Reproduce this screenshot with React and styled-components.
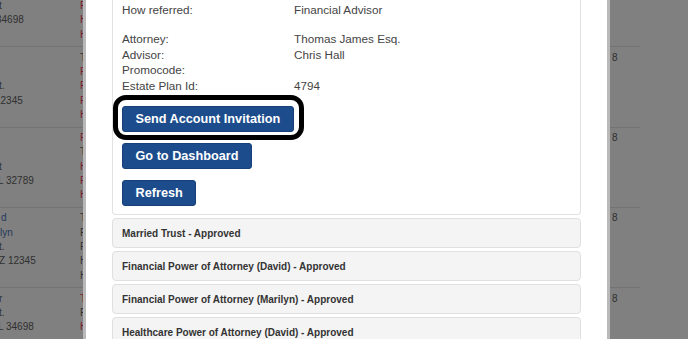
import React from 'react';
import styled, { createGlobalStyle } from 'styled-components';

const GlobalStyle = createGlobalStyle`
    html, body {
        margin: 0;
        padding: 0;
        overflow: hidden;
        background: #808080;
    }
    body {
        font-family: 'Liberation Sans', Arial, sans-serif;
    }
`;

const Screen = styled.div`
    display: flex;
    width: 688px;
    height: 339px;
    overflow: hidden;
    background: #808080;
`;

const Backdrop = styled.div`
    flex: ${props => props.$grow ? '1' : 'none'};
    width: ${props => props.$width ? `${props.$width}px` : 'auto'};
    align-self: flex-start;
    margin-top: -33px;
    overflow: hidden;
`;

const BackTable = styled.div`
    width: ${props => props.$width}px;
`;

const BackRow = styled.div`
    display: flex;
    box-sizing: border-box;
    height: 80.3px;
    padding-top: 3.5px;
    border-bottom: 1px solid #737373;
`;

const AddressCell = styled.div`
    width: 80px;
    flex: none;
    overflow: hidden;
    white-space: nowrap;
`;

const FlagCell = styled.div`
    flex: none;
    padding-left: ${props => props.$pad || 0}px;
`;

const tones = {
    dark: '#2f2f2f',
    red: '#7a1a2c',
    blue: '#26385a',
};

const BackLine = styled.div`
    height: 14.3px;
    line-height: 14.3px;
    font-size: 10px;
    color: ${props => tones[props.$tone || 'dark']};
    text-indent: ${props => props.$indent || 0}px;
`;

const Modal = styled.div`
    flex: none;
    width: 527px;
    box-sizing: border-box;
    display: flex;
    flex-direction: column;
    padding: 0 26px;
    background: #fff;
    border-left: 3px solid #b9b9b9;
    border-right: 3px solid #b9b9b9;
`;

const DetailsPanel = styled.div`
    border: 1px solid #e2e2e2;
    border-top: none;
    border-radius: 0 0 4px 4px;
    padding: 2px 9px 8px;
`;

const InfoGroup = styled.div`
    display: grid;
    grid-template-columns: 172px 1fr;
    font-size: 11.7px;
    line-height: 15.5px;
    color: #444;
    margin-bottom: ${props => props.$gap || 0}px;
`;

const ButtonStack = styled.div`
    display: flex;
    flex-direction: column;
    align-items: flex-start;
    gap: 11px;
    margin-top: 13px;
`;

const Highlight = styled.div`
    position: relative;
    display: flex;

    &::after {
        content: '';
        position: absolute;
        top: -11px;
        left: -9px;
        right: -10px;
        bottom: -7.5px;
        border: 5px solid #000;
        border-radius: 13px;
        pointer-events: none;
    }
`;

const Button = styled.button`
    height: 26px;
    box-sizing: border-box;
    padding: 0 12.5px;
    font-family: 'Liberation Sans', Arial, sans-serif;
    font-size: 12.7px;
    font-weight: bold;
    color: #fff;
    background: #1c4c8c;
    border: 1px solid #174079;
    border-radius: 3px;
    cursor: pointer;
`;

const AccordionItem = styled.div`
    flex: none;
    height: 30px;
    box-sizing: border-box;
    margin-top: 3px;
    padding: 0 9px;
    display: flex;
    align-items: center;
    font-size: 10px;
    font-weight: bold;
    color: #333;
    background: #f4f4f4;
    border: 1px solid #e0e0e0;
    border-radius: 4px;
`;

const leftRows = [
    {
        address: [{}, {}, { text: 't', indent: -1 }, { text: '34698', indent: -4 }],
        flags: [{}, {}, { text: 'F', tone: 'red' }, { text: 'H', tone: 'red' }, { text: 'H', tone: 'red' }],
    },
    {
        address: [{}, {}, { text: 't.', indent: -1 }, { text: '12345', indent: -5 }],
        flags: [{ text: 'T' }, { text: 'F', tone: 'red' }, { text: 'F', tone: 'red' }, { text: 'F', tone: 'red' }, { text: 'H', tone: 'red' }],
    },
    {
        address: [{}, {}, { text: 't', indent: -1 }, { text: 'L 32789', indent: -2 }],
        flags: [{ text: 'F', tone: 'red' }, { text: 'T' }, { text: 'H', tone: 'red' }, { text: 'F', tone: 'red' }, { text: 'H', tone: 'red' }],
    },
    {
        address: [{ text: 'd', tone: 'blue', indent: 1 }, { text: 'lyn', tone: 'blue' }, { text: 't.', indent: -1 }, { text: 'Z 12345', indent: -1 }],
        flags: [{ text: 'T' }, { text: 'F' }, { text: 'F' }, { text: 'H' }, { text: 'H' }],
    },
    {
        address: [{ text: 'r', indent: -1 }, { text: 't.', indent: -1 }, { text: 'L 34698', indent: -2 }],
        flags: [{ text: 'T', tone: 'red' }, { text: 'F' }, { text: 'H', tone: 'red' }],
    },
];

const accordion = [
    'Married Trust - Approved',
    'Financial Power of Attorney (David) - Approved',
    'Financial Power of Attorney (Marilyn) - Approved',
    'Healthcare Power of Attorney (David) - Approved',
];

const contacts = [
    ['Attorney:', 'Thomas James Esq.'],
    ['Advisor:', 'Chris Hall'],
    ['Promocode:', ''],
    ['Estate Plan Id:', '4794'],
];

const renderLines = lines => lines.map((line, i) => (
    <BackLine key={i} $tone={line.tone} $indent={line.indent}>
        {line.text || '\u00a0'}
    </BackLine>
));

const App = () => (
    <>
        <GlobalStyle />
        <Screen>
            <Backdrop $width={83}>
                <BackTable $width={83}>
                    {leftRows.map((row, i) => (
                        <BackRow key={i}>
                            <AddressCell>{renderLines(row.address)}</AddressCell>
                            <FlagCell>{renderLines(row.flags)}</FlagCell>
                        </BackRow>
                    ))}
                </BackTable>
            </Backdrop>

            <Modal>
                <DetailsPanel>
                    <InfoGroup $gap={13.5}>
                        <span>How referred:</span>
                        <span>Financial Advisor</span>
                    </InfoGroup>
                    <InfoGroup>
                        {contacts.map(([label, value]) => (
                            <React.Fragment key={label}>
                                <span>{label}</span>
                                <span>{value}</span>
                            </React.Fragment>
                        ))}
                    </InfoGroup>
                    <ButtonStack>
                        <Highlight>
                            <Button>Send Account Invitation</Button>
                        </Highlight>
                        <Button>Go to Dashboard</Button>
                        <Button>Refresh</Button>
                    </ButtonStack>
                </DetailsPanel>
                {accordion.map(title => (
                    <AccordionItem key={title}>{title}</AccordionItem>
                ))}
            </Modal>

            <Backdrop $grow>
                <BackTable $width={30}>
                    {[0, 1, 2, 3, 4].map(i => (
                        <BackRow key={i}>
                            <FlagCell $pad={2}>
                                {renderLines(i === 0 ? [] : [{ text: '8' }])}
                            </FlagCell>
                        </BackRow>
                    ))}
                </BackTable>
            </Backdrop>
        </Screen>
    </>
);

export default App;
